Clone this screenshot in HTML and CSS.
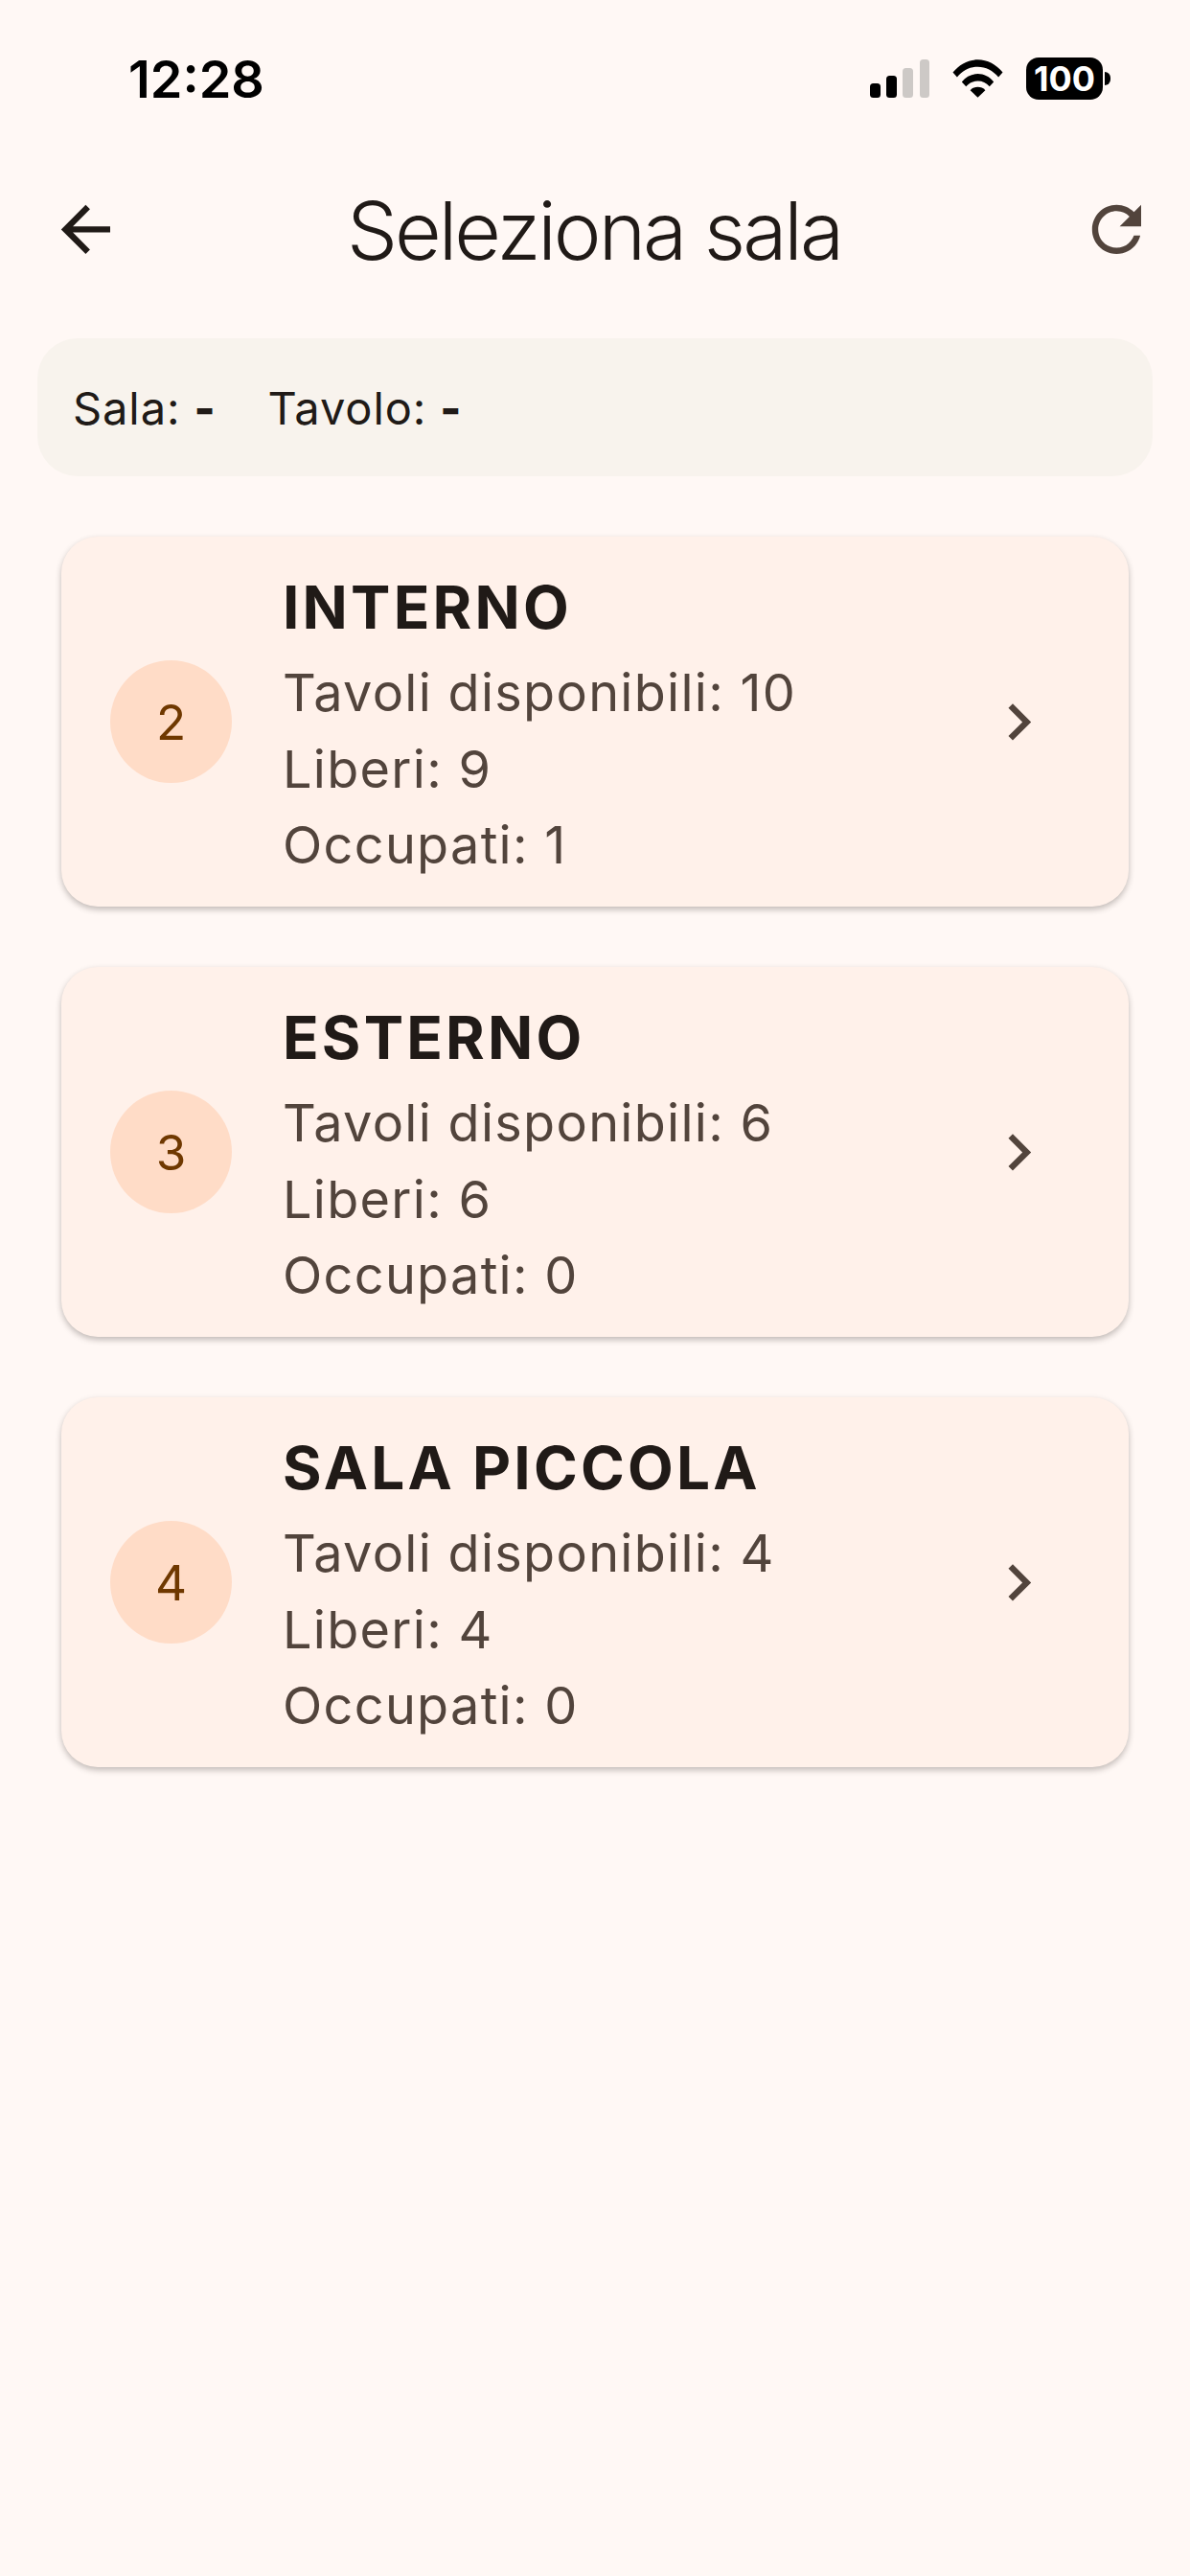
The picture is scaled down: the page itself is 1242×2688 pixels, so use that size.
FILE: index.html
```html
<!DOCTYPE html>
<html>
<head>
	<title>Seleziona sala</title>
	<link rel="stylesheet" href="styles.css">
</head>
<body>
	<div class="status_bar">
		<span class="clock">12:28</span>
		<div class="status_icons">
			<svg class="signal" width="62" height="40" viewBox="0 0 62 40">
				<rect x="0" y="25" width="11" height="15" rx="3.5" fill="#000"/>
				<rect x="17" y="17" width="11" height="23" rx="3.5" fill="#000"/>
				<rect x="34" y="9" width="11" height="31" rx="3.5" fill="#cdc9c6"/>
				<rect x="52" y="0" width="10" height="40" rx="3.5" fill="#cdc9c6"/>
			</svg>
			<svg class="wifi" width="53" height="40" viewBox="0 0 54 40">
				<path d="M0.5 13.5C7.5 5 16.5 0 27 0s19.500 5 26.500 13.500l-4.500 5C43 11.500 35.500 7.500 27 7.500s-16 4-22 11z" fill="#000"/>
				<path d="M10 23.500C14.500 18 20.500 15 27 15s12.500 3 17 8.500l-4.500 5C36 24.500 32 22.500 27 22.500s-9 2-12.500 6z" fill="#000"/>
				<path d="M19 32.500C21 30 24 29 27 29s6 1 8 3.500L27 40z" fill="#000"/>
			</svg>
			<div class="battery">
				<span class="battery_body">100</span>
				<span class="battery_nub"></span>
			</div>
		</div>
	</div>

	<div class="app_bar">
		<svg class="icon icon_dark" viewBox="0 0 24 24"><path d="M20 11H7.830l5.590-5.590L12 4l-8 8 8 8 1.410-1.410L7.830 13H20v-2z"/></svg>
		<h1 class="page_title">Seleziona sala</h1>
		<svg class="icon icon_soft" viewBox="0 0 24 24"><path d="M17.650 6.350C16.200 4.900 14.210 4 12 4c-4.420 0-7.990 3.580-7.990 8s3.570 8 7.990 8c3.730 0 6.840-2.550 7.730-6h-2.080c-.82 2.330-3.040 4-5.650 4-3.310 0-6-2.690-6-6s2.690-6 6-6c1.660 0 3.140.69 4.220 1.780L13 11h7V4l-2.350 2.350z"/></svg>
	</div>

	<div class="selection">
		<span>Sala: <b>-</b></span>
		<span>Tavolo: <b>-</b></span>
	</div>

	<div class="room_list">
		<div class="room_card">
			<div class="room_badge">2</div>
			<div class="room_info">
				<div class="room_name">INTERNO</div>
				<div class="room_line">Tavoli disponibili: 10</div>
				<div class="room_line">Liberi: 9</div>
				<div class="room_line">Occupati: 1</div>
			</div>
			<svg class="icon icon_soft chevron" viewBox="0 0 24 24"><path d="M10 6L8.590 7.410 13.170 12l-4.580 4.590L10 18l6-6z"/></svg>
		</div>
		<div class="room_card">
			<div class="room_badge">3</div>
			<div class="room_info">
				<div class="room_name">ESTERNO</div>
				<div class="room_line">Tavoli disponibili: 6</div>
				<div class="room_line">Liberi: 6</div>
				<div class="room_line">Occupati: 0</div>
			</div>
			<svg class="icon icon_soft chevron" viewBox="0 0 24 24"><path d="M10 6L8.590 7.410 13.170 12l-4.580 4.590L10 18l6-6z"/></svg>
		</div>
		<div class="room_card">
			<div class="room_badge">4</div>
			<div class="room_info">
				<div class="room_name">SALA PICCOLA</div>
				<div class="room_line">Tavoli disponibili: 4</div>
				<div class="room_line">Liberi: 4</div>
				<div class="room_line">Occupati: 0</div>
			</div>
			<svg class="icon icon_soft chevron" viewBox="0 0 24 24"><path d="M10 6L8.590 7.410 13.170 12l-4.580 4.590L10 18l6-6z"/></svg>
		</div>
	</div>
</body>
</html>
```

FILE: styles.css
```css
* {
	box-sizing: border-box;
}

body {
	margin: 0;
	width: 1242px;
	height: 2688px;
	background-color: #FFF8F5;
	font-family: Inter, "Liberation Sans", sans-serif;
	color: #201A17;
	overflow: hidden;
}

.status_bar {
	height: 164px;
	padding: 60px 83px 0 134px;
	display: flex;
	justify-content: space-between;
	align-items: flex-start;
}
.clock {
	font-size: 54px;
	font-weight: 600;
	line-height: 46px;
	color: #000;
}
.status_icons {
	display: flex;
	align-items: center;
}
.wifi {
	margin-left: 24px;
}
.battery {
	margin-left: 24px;
	display: flex;
	align-items: center;
}
.battery_body {
	width: 80px;
	height: 44px;
	border-radius: 13px;
	background-color: #000;
	color: #FFF;
	font-size: 36px;
	font-weight: 700;
	line-height: 44px;
	text-align: center;
}
.battery_nub {
	width: 6px;
	height: 14px;
	margin-left: 2px;
	border-radius: 0 7px 7px 0;
	background-color: #000;
}

.app_bar {
	height: 150px;
	padding: 0 38px 0 51px;
	display: flex;
	align-items: center;
	justify-content: space-between;
}
.page_title {
	margin: 3px 15px 0 0;
	font-size: 84px;
	font-weight: 300;
	line-height: 100px;
	letter-spacing: -3px;
}
.icon {
	width: 76.8px;
	height: 76.8px;
	flex: none;
}
.icon_dark {
	fill: #201A17;
}
.icon_soft {
	fill: #52443C;
}

.selection {
	height: 144px;
	margin: 39px 39px 0;
	padding: 0 37px;
	border-radius: 42px;
	background-color: #F8F3ED;
	display: flex;
	align-items: center;
	gap: 54px;
	font-size: 47px;
	font-weight: 400;
	letter-spacing: 0.9px;
}
.selection b {
	font-weight: 800;
}

.room_list {
	padding: 63px 64px 0;
	display: flex;
	flex-direction: column;
	gap: 63px;
}
.room_card {
	height: 386px;
	padding-left: 51px;
	border-radius: 38px;
	background-color: #FFF1EA;
	box-shadow: 0 3px 6px rgba(32, 26, 23, 0.28);
	display: flex;
	align-items: center;
}
.room_badge {
	width: 127px;
	height: 128px;
	border-radius: 50%;
	background-color: #FFDCC7;
	color: #6F3800;
	font-size: 51.2px;
	display: flex;
	align-items: center;
	justify-content: center;
	flex: none;
}
.room_info {
	margin-left: 53px;
	flex: 1;
}
.room_name {
	font-size: 62px;
	font-weight: 700;
	line-height: 99px;
	letter-spacing: 3.2px;
}
.room_line {
	font-size: 54px;
	font-weight: 400;
	line-height: 79.500px;
	letter-spacing: 1.300px;
	color: #52443C;
}
.chevron {
	margin-right: 76px;
}
```
